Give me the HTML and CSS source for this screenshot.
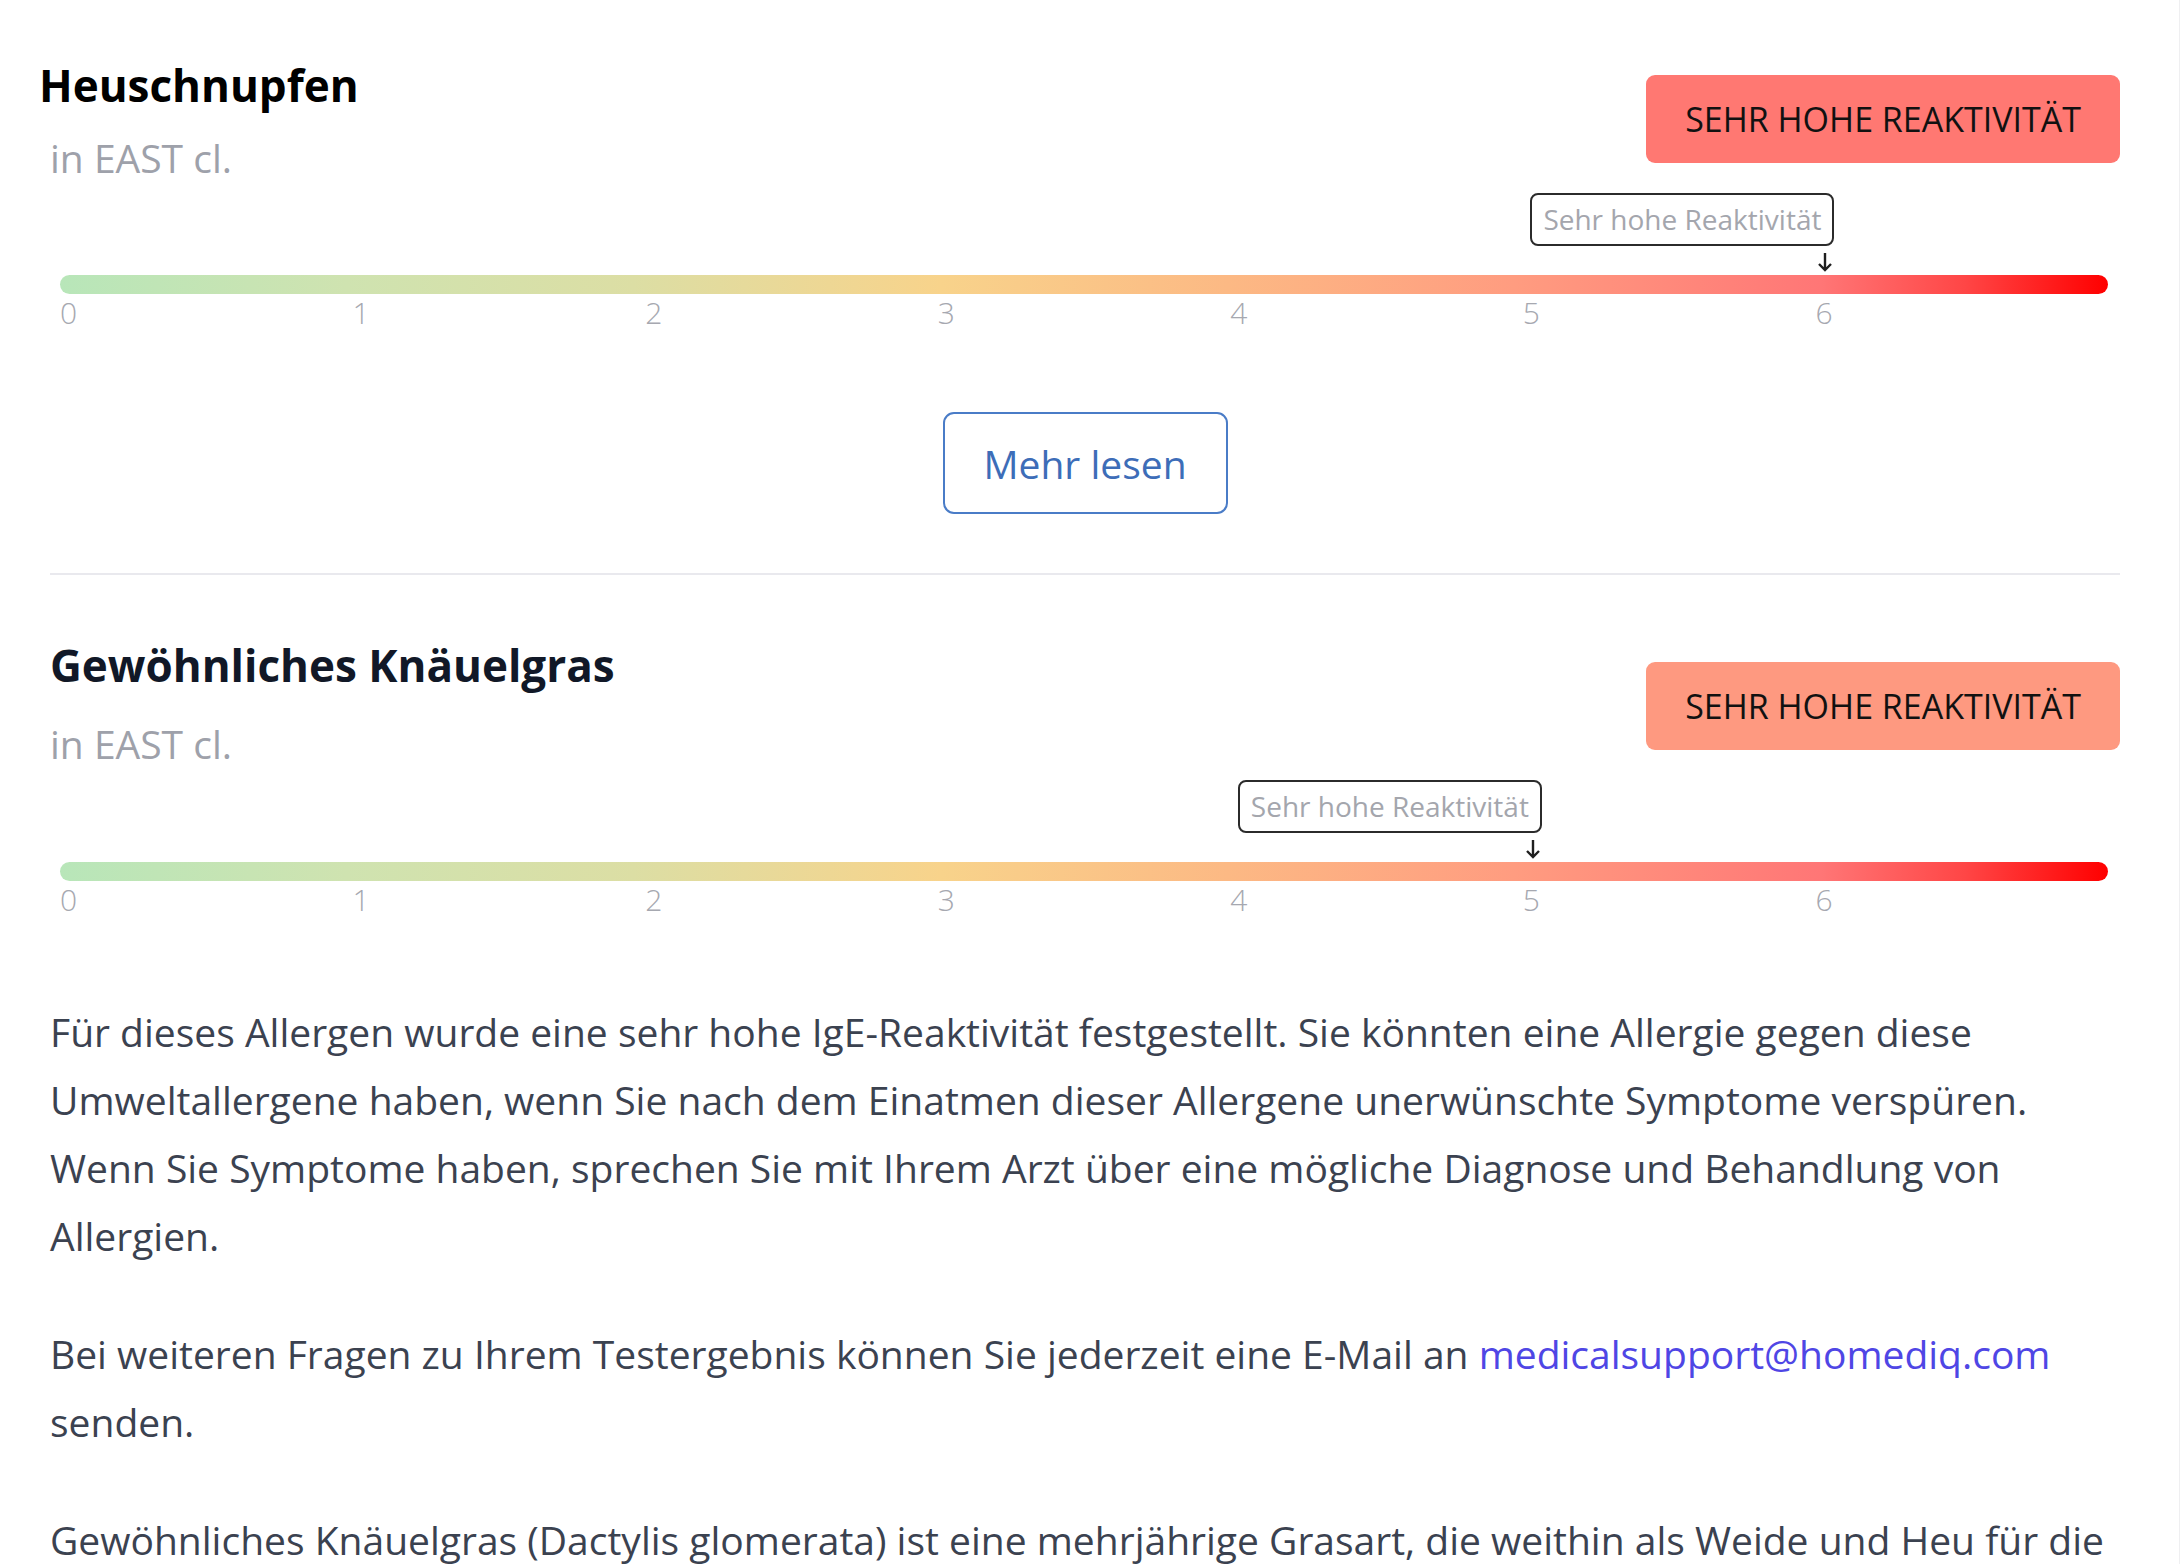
FILE: index.html
```html
<!DOCTYPE html>
<html lang="de">
<head>
<meta charset="utf-8">
<title>Allergene</title>
<link rel="stylesheet" href="styles.css">
</head>
<body>
<div class="page">
  <section class="allergen allergen--first">
    <div class="allergen-head">
      <div class="allergen-name">
        <h2 class="allergen-title allergen-title--plain">Heuschnupfen</h2>
        <p class="allergen-unit">in EAST cl.</p>
      </div>
      <span class="badge badge--red">SEHR HOHE REAKTIVITÄT</span>
    </div>
    <div class="scale">
      <div class="scale-marker" style="left: 85.714%">
        <span class="scale-tip">Sehr hohe Reaktivität</span>
        <svg class="scale-arrow" viewBox="0 0 16 20" width="16" height="20" aria-hidden="true"><path d="M8 1 V18 M2 12 L8 18 L14 12" fill="none" stroke="#1f1f1f" stroke-width="2.4"/></svg>
      </div>
      <div class="scale-bar"></div>
      <div class="scale-labels"><span>0</span><span>1</span><span>2</span><span>3</span><span>4</span><span>5</span><span>6</span></div>
    </div>
    <div class="more">
      <button class="more-btn" type="button">Mehr lesen</button>
    </div>
  </section>

  <hr class="divider">

  <section class="allergen allergen--second">
    <div class="allergen-head">
      <div class="allergen-name">
        <h2 class="allergen-title">Gewöhnliches Knäuelgras</h2>
        <p class="allergen-unit">in EAST cl.</p>
      </div>
      <span class="badge badge--salmon">SEHR HOHE REAKTIVITÄT</span>
    </div>
    <div class="scale">
      <div class="scale-marker" style="left: 71.429%">
        <span class="scale-tip">Sehr hohe Reaktivität</span>
        <svg class="scale-arrow" viewBox="0 0 16 20" width="16" height="20" aria-hidden="true"><path d="M8 1 V18 M2 12 L8 18 L14 12" fill="none" stroke="#1f1f1f" stroke-width="2.4"/></svg>
      </div>
      <div class="scale-bar"></div>
      <div class="scale-labels"><span>0</span><span>1</span><span>2</span><span>3</span><span>4</span><span>5</span><span>6</span></div>
    </div>

    <div class="allergen-text">
      <p>Für dieses Allergen wurde eine sehr hohe IgE-Reaktivität festgestellt. Sie könnten eine Allergie gegen diese Umweltallergene haben, wenn Sie nach dem Einatmen dieser Allergene unerwünschte Symptome verspüren. Wenn Sie Symptome haben, sprechen Sie mit Ihrem Arzt über eine mögliche Diagnose und Behandlung von Allergien.</p>
      <p>Bei weiteren Fragen zu Ihrem Testergebnis können Sie jederzeit eine E-Mail an <a class="mail" href="mailto:medicalsupport@homediq.com">medicalsupport@homediq.com</a> senden.</p>
      <p>Gewöhnliches Knäuelgras (Dactylis glomerata) ist eine mehrjährige Grasart, die weithin als Weide und Heu für die Viehzucht angebaut wird. Ihr Pollen ist eine häufige Ursache für Heuschnupfen im Frühsommer.</p>
    </div>
  </section>
</div>
</body>
</html>
```

FILE: styles.css
```css
html, body {
  margin: 0;
  padding: 0;
  background: #ffffff;
  overflow: hidden;
}

body {
  font-family: "Open Sans", "Noto Sans", "Liberation Sans", sans-serif;
  color: #374151;
}

.page {
  width: 2180px;
  min-height: 1564px;
  box-sizing: border-box;
  padding: 0 59px 0 50px;
  border-right: 1px solid #efeff1;
}

.allergen--first {
  padding-top: 57px;
}

.allergen-head {
  display: flex;
  justify-content: space-between;
  align-items: flex-start;
}

.allergen-title {
  margin: 0;
  font-size: 44px;
  line-height: 57px;
  font-weight: 700;
  color: #111827;
}

.allergen-title--plain {
  margin-left: -11px;
  color: #000000;
}

.allergen-unit {
  margin: 18px 0 0;
  font-size: 39px;
  line-height: 52px;
  color: #9ea1aa;
}

.allergen--second .allergen-unit {
  margin-top: 24px;
}

.badge {
  display: block;
  margin-top: 18px;
  height: 88px;
  padding: 0 39px;
  border-radius: 9px;
  font-size: 34px;
  line-height: 88px;
  font-weight: 500;
  color: #111111;
  white-space: nowrap;
}

.allergen--second .badge {
  margin-top: 25px;
}

.badge--red {
  background: #ff7872;
}

.badge--salmon {
  background: #fe9980;
}

.scale {
  position: relative;
  margin: 9px 12px 0 10px;
  padding-top: 82px;
}

.allergen--second .scale {
  margin-top: 10px;
}

.scale-marker {
  position: absolute;
  top: 0;
  width: 19px;
  height: 82px;
}

.scale-tip {
  position: absolute;
  top: 0;
  right: 0;
  height: 53px;
  box-sizing: border-box;
  padding: 0 11px;
  border: 2px solid #2b2b2b;
  border-radius: 8px;
  background: #ffffff;
  font-size: 28px;
  line-height: 49px;
  color: #a4a6ad;
  white-space: nowrap;
}

.scale-arrow {
  position: absolute;
  left: 2px;
  top: 59px;
  display: block;
}

.scale-bar {
  height: 19px;
  border-radius: 10px;
  background: linear-gradient(to right,
    #b8e6b9 0%,
    #cfe3b0 14%,
    #dcdea4 28%,
    #f8d38b 43%,
    #fcb984 57%,
    #ff9c80 71%,
    #ff7676 86%,
    #ff4646 93%,
    #ff0000 100%);
}

.scale-labels {
  display: grid;
  grid-template-columns: repeat(7, 1fr);
  font-size: 30px;
  line-height: 38px;
  font-weight: 300;
  color: #a6a8b0;
}

.more {
  display: flex;
  justify-content: center;
  margin-top: 80px;
}

.more-btn {
  width: 285px;
  height: 102px;
  box-sizing: border-box;
  border: 2px solid #4a7cc7;
  border-radius: 11px;
  background: #ffffff;
  font-family: "Open Sans", "Noto Sans", sans-serif;
  font-size: 39px;
  color: #3d6db8;
  cursor: pointer;
}

.divider {
  margin: 59px 0 0;
  border: 0;
  height: 2px;
  background: #e9e9ee;
}

.allergen--second {
  padding-top: 62px;
}

.allergen-text {
  margin-top: 79px;
}

.allergen-text p {
  margin: 0 0 50px;
  font-size: 39px;
  line-height: 68px;
  color: #3b4250;
}

.mail {
  color: #4f46e5;
  text-decoration: none;
}
```
